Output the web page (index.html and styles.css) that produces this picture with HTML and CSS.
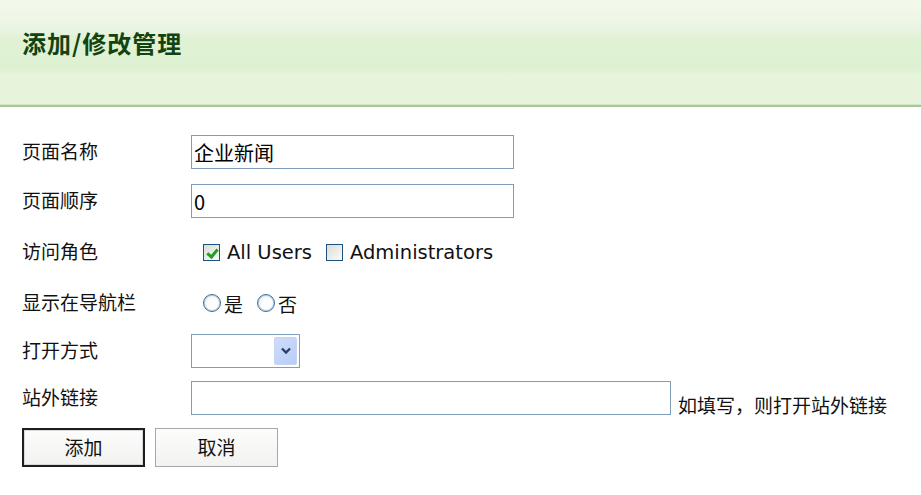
FILE: index.html
```html
<!DOCTYPE html>
<html>
<head>
    <meta charset="utf-8">
    <title>添加/修改管理</title>
    <link rel="stylesheet" href="styles.css">
</head>
<body>
    <div class="page-head">
        <h1>添加/修改管理</h1>
    </div>

    <form class="edit-form">
        <label class="field-label" for="page-name">页面名称</label>
        <div class="field"><input type="text" id="page-name" class="text-box" value="企业新闻"></div>

        <label class="field-label" for="page-order">页面顺序</label>
        <div class="field"><input type="text" id="page-order" class="text-box" value="0"></div>

        <span class="field-label">访问角色</span>
        <div class="field choices">
            <label class="choice"><input type="checkbox" class="check" checked> All Users</label>
            <label class="choice"><input type="checkbox" class="check"> Administrators</label>
        </div>

        <span class="field-label">显示在导航栏</span>
        <div class="field choices cn">
            <label class="choice"><input type="radio" name="nav" class="radio">是</label>
            <label class="choice"><input type="radio" name="nav" class="radio">否</label>
        </div>

        <label class="field-label" for="open-mode">打开方式</label>
        <div class="field">
            <div class="drop">
                <select id="open-mode"><option></option></select>
                <span class="drop-btn">
                    <svg width="12" height="8" viewBox="0 0 12 8"><path d="M2 1.5 L6 5.5 L10 1.5" fill="none" stroke="#2c3f6b" stroke-width="2.4"/></svg>
                </span>
            </div>
        </div>

        <label class="field-label" for="ext-link">站外链接</label>
        <div class="field">
            <input type="text" id="ext-link" class="text-box wide">
            <span class="hint">如填写，则打开站外链接</span>
        </div>

        <div class="actions">
            <button type="button" class="btn default">添加</button>
            <button type="button" class="btn">取消</button>
        </div>
    </form>
</body>
</html>
```

FILE: styles.css
```css
body { margin: 0; background: #fff; font-family: "Noto Sans CJK SC", "DejaVu Sans", sans-serif; font-size: 19px; color: #111; }

/* header band */
.page-head { height: 105px; border-bottom: 2px solid #a6c79b; box-shadow: inset 0 -1px 0 #d4e8c8;
    background: linear-gradient(to bottom, #f4f9ec 0px, #eef6e7 20px, #e9f4e0 32px, #e0f1d4 38px, #dff1d3 70px, #e5f4da 74px, #e7f4dd 105px);
    display: flex; align-items: center; padding-left: 22px; }
.page-head h1 { margin: 0 0 20px 0; font-size: 24px; font-weight: bold; color: #114411; letter-spacing: 1px; }

/* form grid */
.edit-form { display: grid; grid-template-columns: 169px auto; grid-template-rows: 49px 51px 51px 48px 47px 47px 39px; padding: 28px 0 0 22px; }
.field-label { display: flex; align-items: center; height: 34px; font-size: 19px; color: #111; padding-bottom: 4px; box-sizing: border-box; }
.field { display: flex; align-items: center; height: 34px; }

.text-box { width: 323px; height: 34px; box-sizing: border-box; border: 1px solid #7f9db9; padding: 0 2px; font-family: "Noto Sans CJK SC", "DejaVu Sans", sans-serif; font-size: 20px; color: #000; outline: none; }
.text-box.wide { width: 480px; }
.hint { margin-left: 7px; font-size: 19px; padding-top: 12px; white-space: nowrap; }

/* checkboxes and radios */
.choices { padding-left: 12px; gap: 14px; font-family: "DejaVu Sans", sans-serif; font-size: 19.5px; color: #111; }
.choices.cn { font-family: "Noto Sans CJK SC", sans-serif; font-size: 19px; gap: 14px; }
.choice { display: flex; align-items: center; gap: 7px; }
.choices.cn .choice { gap: 3px; }
.check { appearance: none; margin: 0; width: 17px; height: 17px; box-sizing: border-box; border: 1px solid #1c5180;
    background: linear-gradient(135deg, #dcdcd5, #fbfbf9); position: relative; }
.check:checked::after { content: ""; position: absolute; left: 5px; top: 2px; width: 4px; height: 8px;
    border: solid #21a121; border-width: 0 3px 3px 0; transform: rotate(40deg); }
.radio { appearance: none; margin: 0; width: 18px; height: 18px; box-sizing: border-box; border-radius: 50%;
    border: 1px solid #3e6f9c; background: radial-gradient(circle at 60% 60%, #fdfdfd 40%, #e4e6e6 100%); box-shadow: inset 0 0 0 1px #bfd0e0; }

/* drop-down */
.drop { display: flex; width: 109px; height: 34px; box-sizing: border-box; border: 1px solid #7f9db9; background: #fff; padding: 2px; }
.drop select { appearance: none; flex: 1; border: 0; outline: none; background: transparent; min-width: 0; }
.drop-btn { width: 23px; display: flex; align-items: center; justify-content: center; border-radius: 2px;
    background: linear-gradient(135deg, #cfdcfb, #b9cdf6); border: 1px solid #c4d5f6; box-sizing: border-box; }

/* buttons */
.actions { grid-column: 1 / 3; display: flex; gap: 10px; }
.btn { width: 123px; height: 39px; font-family: "Noto Sans CJK SC", sans-serif; font-size: 19px; color: #111;
    background: linear-gradient(to bottom, #fcfcfc, #f2f2f0); border: 1px solid #a8a8a8; padding: 0 0 3px 0; }
.btn.default { border: 2px solid #1e1e1e; box-shadow: inset 0 0 0 1px #d8d8d8; }
```
